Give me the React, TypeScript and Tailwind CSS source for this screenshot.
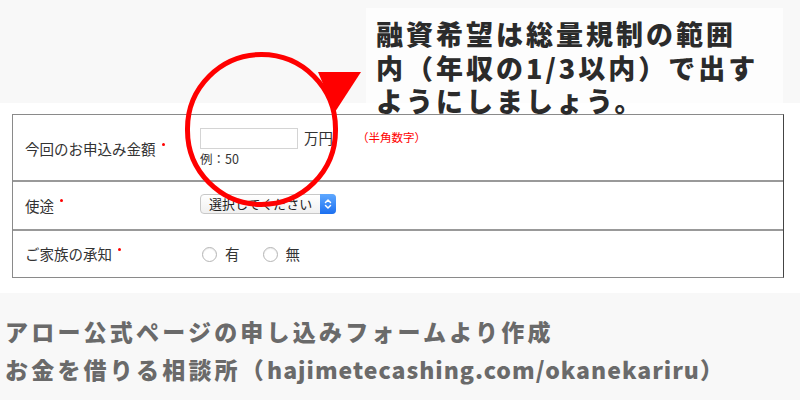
const jp = "font-['Noto_Sans_CJK_JP','Noto_Sans',sans-serif]";

function Required() {
  return <span className="ml-[6px] inline-block h-[3px] w-[3px] -translate-y-[5px] rounded-full bg-[#ff0000]" />;
}

function Radio({ label }: { label: string }) {
  return (
    <label className="flex items-center gap-[8px]">
      <span className="h-[15px] w-[15px] rounded-full border border-[#b5b5b5] bg-white shadow-[inset_0_1px_1px_rgba(0,0,0,0.08)]" />
      <span>{label}</span>
    </label>
  );
}

export default function App() {
  return (
    <div className={`relative h-[400px] w-[800px] overflow-hidden bg-[#f8f8f8] ${jp}`}>
      {/* callout */}
      <div className="h-[103px] pl-[366px] pt-[8px]">
        <div className="h-[95px] w-[417px] bg-[#fdfdfd] pl-[10px] pt-[12px] text-[27px] font-black leading-[27px] tracking-[3px] text-[#2b2b2b]">
          <p className="h-[33.5px] whitespace-nowrap">融資希望は総量規制の範囲</p>
          <p className="h-[33.5px] whitespace-nowrap">内（年収の1/3以内）で出す</p>
          <p className="h-[33.5px] whitespace-nowrap">ようにしましょう。</p>
        </div>
      </div>

      {/* form */}
      <div className="h-[190px] bg-white px-[12px] pt-[11px]">
        <div className="w-[772px] border border-[#8a8a8a] border-r-[#444] text-[14.5px] text-[#333]">
          <div className="flex h-[65px] items-center">
            <div className="flex w-[187px] items-center pl-[12px] pt-[3px]">
              今回のお申込み金額
              <Required />
            </div>
            <div className="flex flex-col">
              <div className="flex items-center">
                <input className="h-[21px] w-[98px] border border-[#d4d4d4] bg-white outline-none" />
                <span className="ml-[6px]">万円</span>
                <span className="ml-[24px] text-[11.5px] text-[#ff0000]">（半角数字）</span>
              </div>
              <span className="mt-[1px] text-[12.5px] leading-[18px]">例：50</span>
            </div>
          </div>
          <div className="flex h-[49px] items-center border-t-2 border-[#999]">
            <div className="flex w-[187px] items-center pl-[12px]">
              使途
              <Required />
            </div>
            <div className="-mt-[3px] flex h-[20px] w-[136px] items-center justify-between rounded-[4px] border border-[#c8c8c8] bg-gradient-to-b from-white to-[#f0f0f0] pl-[8px] text-[13px] text-[#222]">
              <span>選択してください</span>
              <span className="-mr-px flex h-[20px] w-[16px] items-center justify-center rounded-r-[4px] bg-gradient-to-b from-[#5ea8ff] to-[#1b6ff0]">
                <svg width="8" height="12" viewBox="0 0 8 12" fill="none" stroke="white" strokeWidth="1.5" strokeLinecap="round" strokeLinejoin="round">
                  <path d="M1.5 4.5 4 2l2.5 2.5M1.5 7.5 4 10l2.5-2.5" />
                </svg>
              </span>
            </div>
          </div>
          <div className="flex h-[48px] items-center border-t-2 border-[#999]">
            <div className="flex w-[189px] items-center pl-[12px]">
              ご家族の承知
              <Required />
            </div>
            <div className="flex items-center gap-[23px]">
              <Radio label="有" />
              <Radio label="無" />
            </div>
          </div>
        </div>
      </div>

      {/* credit */}
      <div className="pl-[5px] pt-[19px] text-[23px] font-black leading-[38px] tracking-[3.2px] text-[#6a6a6a]">
        <p className="whitespace-nowrap">アロー公式ページの申し込みフォームより作成</p>
        <p className="whitespace-nowrap">
          お金を借りる相談所（<span className="tracking-[1px]">hajimetecashing.com/okanekariru</span>）
        </p>
      </div>

      {/* annotation */}
      <div className="absolute left-[185px] top-[52px] h-[155px] w-[153px] rounded-full border-[5px] border-[#ff0000]" />
      <svg className="absolute left-0 top-0" width="800" height="400">
        <polygon points="318,72 361,72 335,112" fill="#ff0000" />
      </svg>
    </div>
  );
}
